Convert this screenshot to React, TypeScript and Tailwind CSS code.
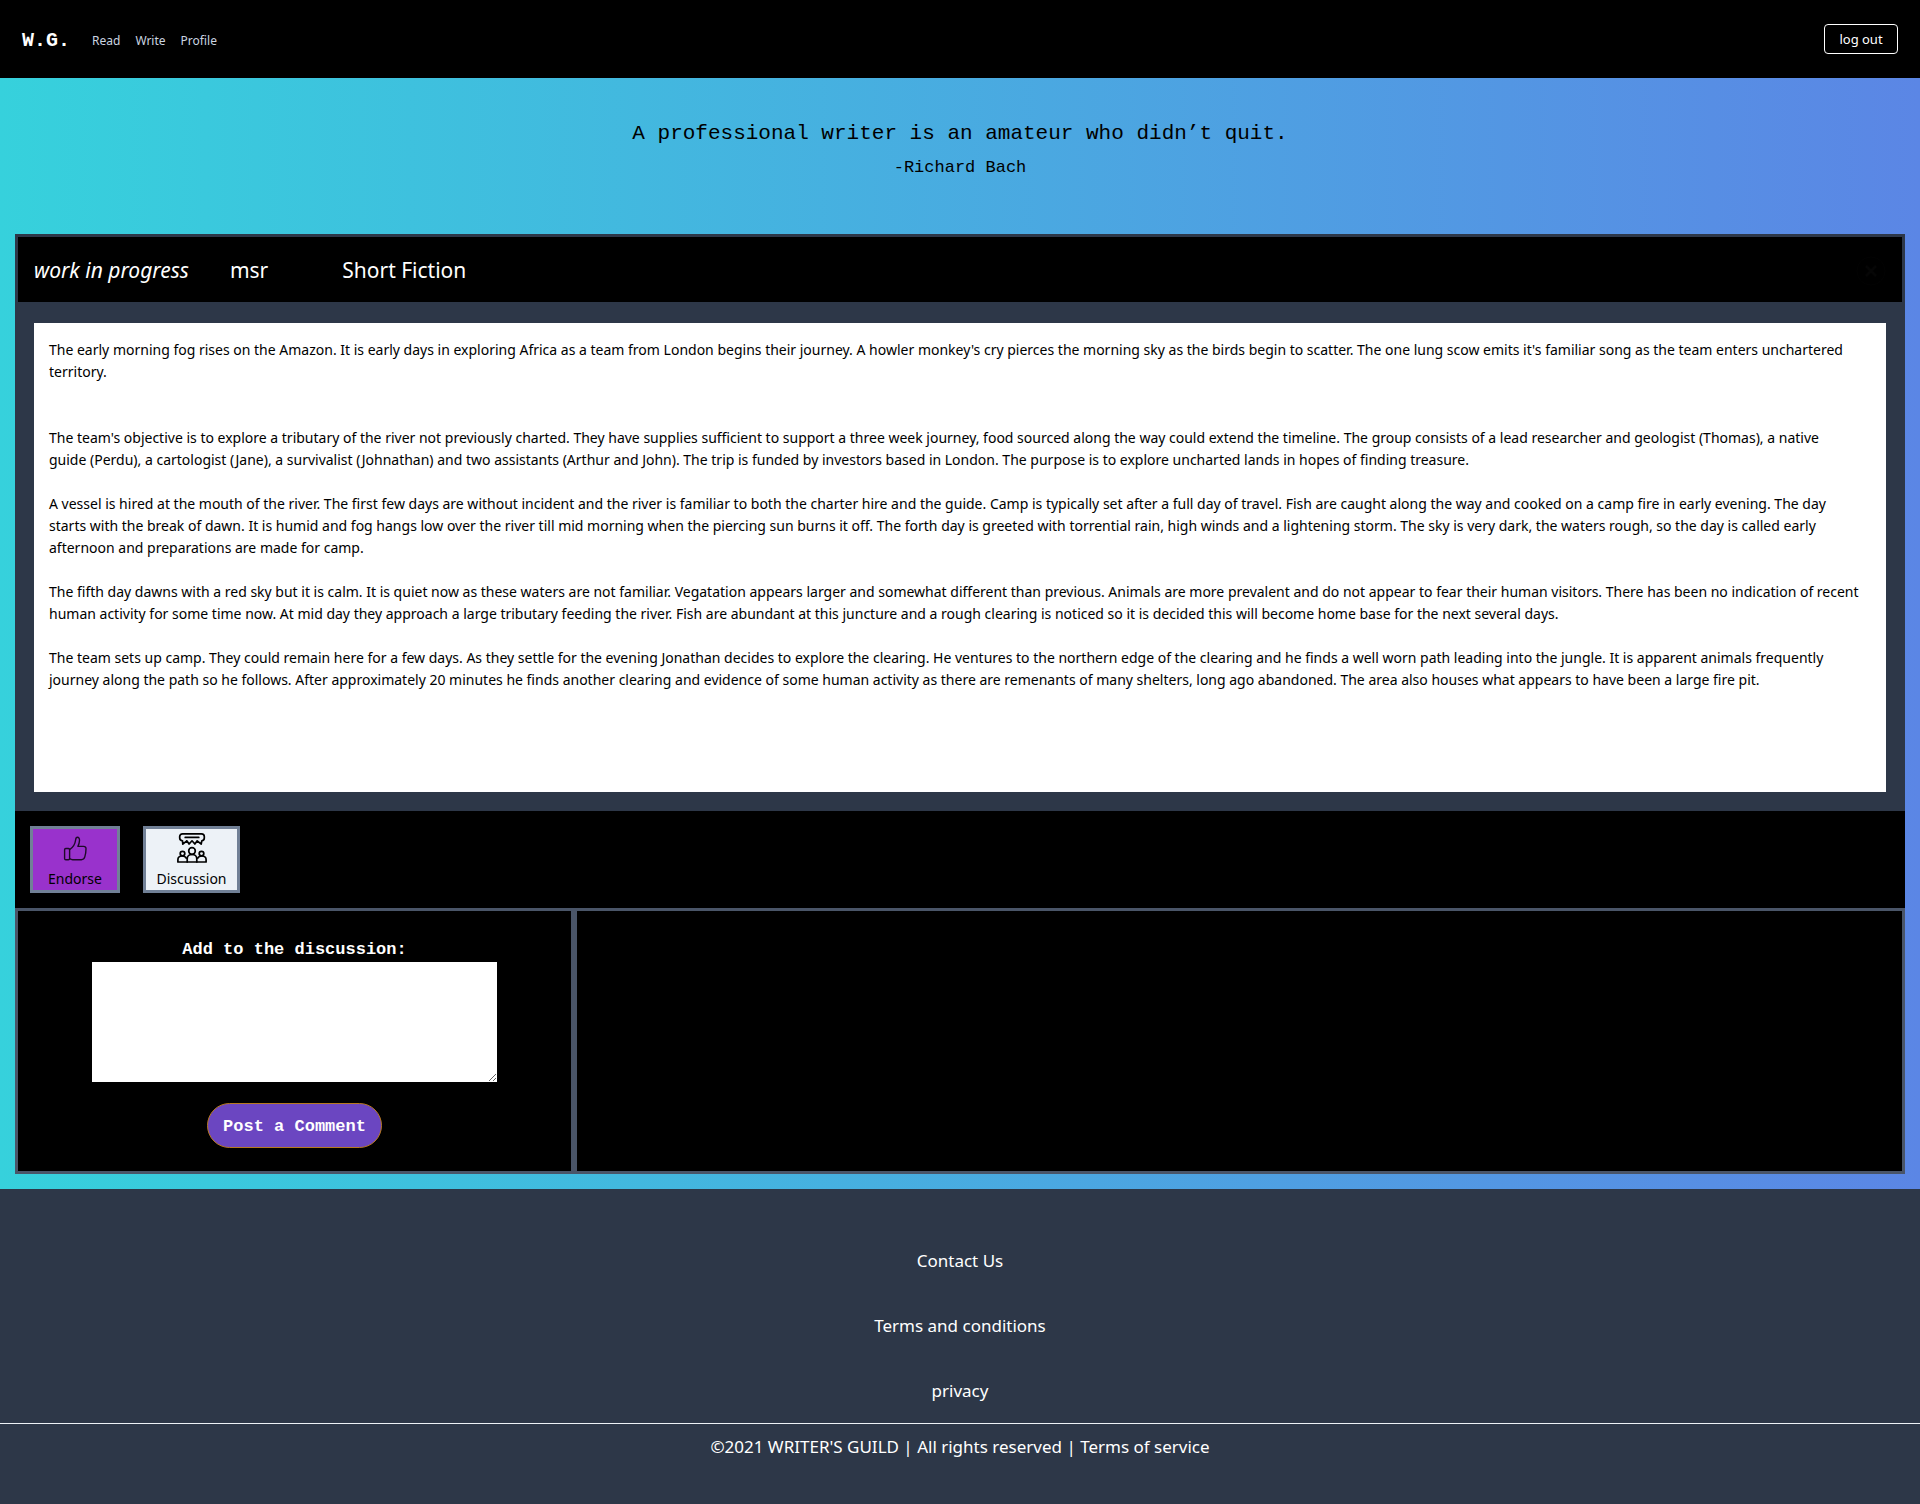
const navLinks = ["Read", "Write", "Profile"];
const footerLinks = ["Contact Us", "Terms and conditions", "privacy"];

const story = [
  "The team's objective is to explore a tributary of the river not previously charted. They have supplies sufficient to support a three week journey, food sourced along the way could extend the timeline. The group consists of a lead researcher and geologist (Thomas), a native guide\u00a0(Perdu), a cartologist (Jane), a survivalist (Johnathan) and two assistants (Arthur and John). The trip is funded by investors based in London. The purpose is to explore uncharted lands in hopes of finding treasure.",
  "A vessel is hired at the mouth of the river. The first few days are without incident and the river is familiar to both the charter hire and the guide. Camp is typically set after a full day of travel. Fish are caught along the way and cooked on a camp fire in early evening. The day starts\u00a0with the break of dawn. It is humid and fog hangs low over the river till mid morning when the piercing sun burns it off. The forth day is greeted with torrential rain, high winds and a lightening storm. The sky is very dark, the waters rough, so the day is called early afternoon and preparations are made for camp.",
  "The fifth day dawns with a red sky but it is calm. It is quiet now as these waters are not familiar. Vegatation appears larger and somewhat different than previous. Animals are more prevalent and do not appear to fear their human visitors. There has been no indication of recent human activity for some time now. At mid day they approach a large tributary feeding the river. Fish are abundant at this juncture and a rough clearing is noticed so it is decided this will become home base for the next several days.",
  "The team sets up camp. They could remain here for a few days. As they settle for the evening Jonathan decides to explore the clearing. He ventures to the northern edge of the clearing and he finds a well worn path leading into the jungle. It is apparent animals frequently journey along the path so he follows. After approximately 20 minutes he finds another clearing and evidence of some human activity as there are remenants of many shelters, long ago abandoned. The area also houses what appears to have been a large fire pit.",
];

function ThumbIcon() {
  return (
    <svg className="h-[30px] w-[30px] opacity-80" viewBox="0 0 30 30" fill="none" stroke="currentColor" strokeWidth="1.4" strokeLinejoin="round" strokeLinecap="round" aria-hidden="true">
      <rect x="4.6" y="15.500" width="5" height="11.200" rx="1.2" />
      <path d="M9.600 16.600c3.600-2.200 5.400-4.800 6-9.600.2-1.800.8-2.700 1.800-2.700 1.400 0 2.200 1.300 2.100 3.200-.1 2.200-.7 4-1.600 5.900h5.700c1.500 0 2.500 1 2.400 2.400 0 2.800-.4 5.500-1.200 8.100-.6 2-1.600 2.800-3.400 2.800H12.600c-1.200 0-2-.4-3-1" />
    </svg>
  );
}

function DiscussionIcon() {
  return (
    <svg className="h-[30px] w-[30px]" viewBox="0 0 30 30" fill="none" stroke="currentColor" strokeWidth="1.7" strokeLinejoin="round" strokeLinecap="round" aria-hidden="true">
      <path d="M5.500.9h19c1.700 0 2.800 1.100 2.800 2.700v1.500c0 1.600-1 2.500-2.500 2.700l-.6 3.400-4-3.400-2.300 3.200-2.900-3.200-2.900 3.200-2.300-3.200-4 3.400-.3-3.400C3.700 7.600 2.700 6.700 2.700 5.100V3.600C2.700 2 3.800.9 5.500.9Z" />
      <path d="M8.200 4.400h13.600" />
      <circle cx="15" cy="18" r="3.300" />
      <path d="M10.200 29v-3.200c0-2.500 2-4.300 4.800-4.300s4.800 1.800 4.800 4.300V29" />
      <circle cx="5.500" cy="20.600" r="2.300" />
      <circle cx="24.500" cy="20.600" r="2.300" />
      <path d="M.9 29v-2.300c0-2.200 1.700-3.700 4.200-3.700 2 0 3.600.8 4.200 2.200M29.100 29v-2.300c0-2.200-1.700-3.700-4.200-3.700-2 0-3.600.8-4.200 2.200M.9 29h28.200" />
    </svg>
  );
}

function CloseIcon() {
  return (
    <svg className="h-[30px] w-[30px]" viewBox="0 0 30 30" fill="none" stroke="currentColor" aria-hidden="true">
      <circle cx="15" cy="15" r="14" strokeWidth="1" className="opacity-50" />
      <path d="M10 10l10 10M20 10L10 20" strokeWidth="2.500" />
    </svg>
  );
}

export default function App() {
  return (
    <div className="font-['Noto_Sans','Open_Sans',sans-serif] text-black">
      <div className="bg-gradient-to-r from-[#36d1dc] to-[#5b86e5] [--tw-gradient-position:to_right]">
        <header className="flex h-[78px] items-center bg-black px-[22px]">
          <span className="mt-[3px] mr-[22px] font-['Liberation_Mono',monospace] text-[20px] font-bold text-white">W.G.</span>
          <nav className="mt-[3px] flex gap-[15px] text-[12px] text-[#cbd5e0]">
            {navLinks.map((label) => (
              <a key={label} href="#">{label}</a>
            ))}
          </nav>
          <button className="ml-auto h-[30px] w-[74px] rounded border border-white pt-[2px] text-[13px] text-white">log out</button>
        </header>

        <section className="px-4 pt-[39px] pb-[49px] text-center font-['Liberation_Mono',monospace]">
          <p className="text-[21px] leading-[34px]">A professional writer is an amateur who didn’t quit.</p>
          <p className="text-[17px] leading-[34px]">-Richard Bach</p>
        </section>

        <main className="px-[15px] pb-[15px]">
          <article className="flex flex-col border-x-[3px] border-t-[3px] border-[#2d3748] bg-[#2d3748]">
            <div className="flex h-[65px] items-center bg-black px-4 pt-[2px] text-[21px] text-white">
              <h1 className="italic">work in progress</h1>
              <span className="ml-[41px]">msr</span>
              <span className="ml-[74px]">Short Fiction</span>
              <button aria-label="Close" className="ml-auto text-[#060606]"><CloseIcon /></button>
            </div>
            <div className="mx-4 mt-[21px] mb-[19px] min-h-[469px] bg-white px-[15px] pt-4 pb-4 text-[14px] leading-[22px]">
              <p className="mb-11">
                The early morning fog rises on the Amazon. It is early days in exploring Africa as a team from London begins their journey. A howler monkey's cry pierces the morning sky as the birds begin to scatter. The one lung scow emits it's familiar song as the team enters unchartered territory.
              </p>
              {story.map((text) => (
                <p key={text} className="mb-[22px]">{text}</p>
              ))}
            </div>
          </article>

          <div className="flex gap-[23px] bg-black p-[15px] text-[14px] leading-[22px]">
            <button className="flex h-[67px] w-[90px] flex-col items-center justify-end border-[3px] border-[#718096] bg-[#9932cc]">
              <ThumbIcon />
              <span className="pt-[5px]">Endorse</span>
            </button>
            <button className="flex h-[67px] w-[97px] flex-col items-center justify-end border-[3px] border-[#718096] bg-[#edf2f7]">
              <DiscussionIcon />
              <span className="pt-[5px]">Discussion</span>
            </button>
          </div>

          <div className="grid grid-cols-[21fr_50fr]">
            <form className="flex flex-col items-center border-[3px] border-[#4a5568] bg-black px-4 pt-[27px] pb-[23px] font-['Liberation_Mono',monospace] text-[17px] font-bold text-white">
              <label htmlFor="comment" className="leading-6">Add to the discussion:</label>
              <textarea id="comment" className="block h-[120px] w-[405px] max-w-full bg-white text-black" />
              <button type="button" className="mt-[21px] h-[45px] rounded-[23px] border border-[#b7791f] bg-[#6b46c1] px-[15px] pt-[2px]">Post a Comment</button>
            </form>
            <div className="border-[3px] border-[#4a5568] bg-black" />
          </div>
        </main>
      </div>

      <footer className="bg-[#2d3748] pt-[39px] pb-[43px] text-center text-[17px] text-white">
        <nav className="flex flex-col">
          {footerLinks.map((label) => (
            <a key={label} href="#" className="py-[19px] leading-[27px]">{label}</a>
          ))}
        </nav>
        <p className="border-t border-[#edf2f7] pt-[9px] leading-[28px]">©2021 WRITER'S GUILD | All rights reserved | Terms of service</p>
      </footer>
    </div>
  );
}
